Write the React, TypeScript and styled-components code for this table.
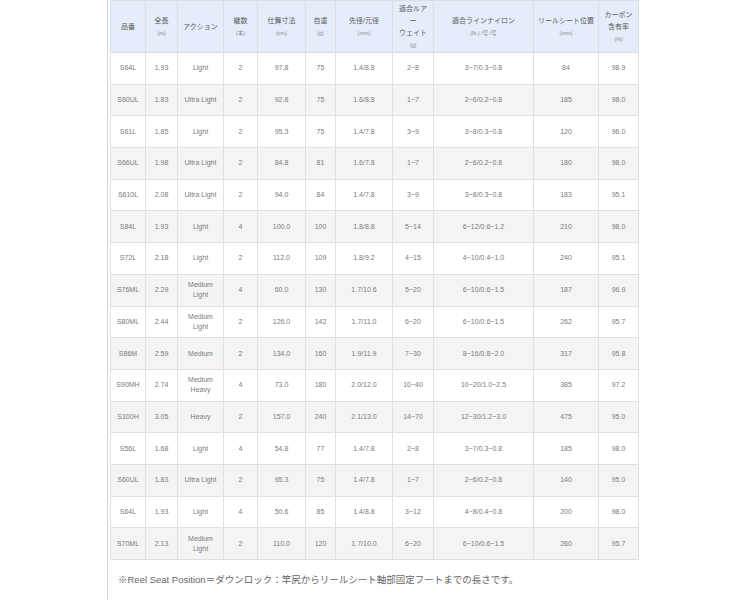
import React from 'react';
import styled, { createGlobalStyle } from 'styled-components';

const GlobalStyle = createGlobalStyle`
  html, body {
    margin: 0;
    padding: 0;
    background: #ffffff;
  }

  body {
    font-family: 'Liberation Sans', 'Noto Sans CJK JP', sans-serif;
  }
`;

const Page = styled.div`
  width: 750px;
  height: 600px;
  overflow: hidden;
  padding-left: 107px;
  box-sizing: border-box;
`;

const Frame = styled.div`
  height: 600px;
  border-left: 1px solid #d6d6d6;
  padding-left: 2px;
  box-sizing: border-box;
`;

const Table = styled.table`
  width: 528px;
  table-layout: fixed;
  border-collapse: collapse;
  color: #7a7a7a;
  font-size: 7px;
`;

const HeadRow = styled.tr`
  height: 52px;
  background: #e4edf9;
`;

const HeadCell = styled.th`
  border: 1px solid #d9dfe6;
  padding: 0 1px;
  font-weight: normal;
  color: #5c5c5c;
  font-size: 7px;
  line-height: 12px;
  text-align: center;
  vertical-align: middle;
`;

const Unit = styled.span`
  display: block;
  font-size: 5.5px;
  color: #8c8c8c;
`;

const Row = styled.tr<{ $shade: boolean }>`
  height: 31.7px;
  background: ${(p) => (p.$shade ? '#f4f4f4' : '#ffffff')};
`;

const Cell = styled.td`
  border: 1px solid #e0e0e0;
  padding: 0 2px;
  text-align: center;
  vertical-align: middle;
  line-height: 10px;
  white-space: nowrap;
`;

const Note = styled.p`
  margin: 12px 0 0 8px;
  font-size: 9.5px;
  color: #666;
`;

const widths = [35, 32, 46, 34, 48, 30, 57, 41, 100, 65, 40];

const heads: [React.ReactNode, string?][] = [
  ['品番'],
  ['全長', '(m)'],
  ['アクション'],
  ['継数', '(本)'],
  ['仕舞寸法', '(cm)'],
  ['自重', '(g)'],
  ['先径/元径', '(mm)'],
  [<>適合ルア<br />ー<br />ウェイト</>, '(g)'],
  [<>適合ラインナイロン</>, '(lb.) /号 /号'],
  ['リールシート位置', '(mm)'],
  [<>カーボン<br />含有率</>, '(%)'],
];

const rows: string[][] = [
  ['S64L', '1.93', 'Light', '2', '97.8', '75', '1.4/8.8', '2~8', '3~7/0.3~0.8', '84', '98.9'],
  ['S60UL', '1.83', 'Ultra Light', '2', '92.8', '75', '1.6/8.8', '1~7', '2~6/0.2~0.8', '185', '98.0'],
  ['S61L', '1.85', 'Light', '2', '95.3', '75', '1.4/7.8', '3~9', '3~8/0.3~0.8', '120', '96.0'],
  ['S66UL', '1.98', 'Ultra Light', '2', '84.8', '81', '1.6/7.8', '1~7', '2~6/0.2~0.8', '180', '98.0'],
  ['S610L', '2.08', 'Ultra Light', '2', '94.0', '84', '1.4/7.8', '3~9', '3~8/0.3~0.8', '183', '95.1'],
  ['S84L', '1.93', 'Light', '4', '100.0', '100', '1.8/8.8', '5~14', '6~12/0.6~1.2', '210', '98.0'],
  ['S72L', '2.18', 'Light', '2', '112.0', '109', '1.8/9.2', '4~15', '4~10/0.4~1.0', '240', '95.1'],
  ['S76ML', '2.29', 'Medium|Light', '4', '60.0', '130', '1.7/10.6', '5~20', '6~10/0.6~1.5', '187', '96.9'],
  ['S80ML', '2.44', 'Medium|Light', '2', '126.0', '142', '1.7/11.0', '6~20', '6~10/0.6~1.5', '262', '95.7'],
  ['S86M', '2.59', 'Medium', '2', '134.0', '160', '1.9/11.9', '7~30', '8~16/0.8~2.0', '317', '95.8'],
  ['S90MH', '2.74', 'Medium|Heavy', '4', '73.0', '180', '2.0/12.0', '10~40', '10~20/1.0~2.5', '385', '97.2'],
  ['S100H', '3.05', 'Heavy', '2', '157.0', '240', '2.1/13.0', '14~70', '12~30/1.2~3.0', '475', '95.0'],
  ['S56L', '1.68', 'Light', '4', '54.8', '77', '1.4/7.8', '2~8', '3~7/0.3~0.8', '185', '98.0'],
  ['S60UL', '1.83', 'Ultra Light', '2', '95.3', '75', '1.4/7.8', '1~7', '2~6/0.2~0.8', '140', '95.0'],
  ['S64L', '1.93', 'Light', '4', '50.6', '85', '1.4/8.8', '3~12', '4~8/0.4~0.8', '200', '98.0'],
  ['S70ML', '2.13', 'Medium|Light', '2', '110.0', '120', '1.7/10.0', '6~20', '6~10/0.6~1.5', '260', '95.7'],
];

const renderText = (text: string) => {
  const parts = text.split('|');
  return parts.map((part, i) => (
    <React.Fragment key={i}>
      {i > 0 && <br />}
      {part}
    </React.Fragment>
  ));
};

const App: React.FC = () => {
  return (
    <Page>
      <GlobalStyle />
      <Frame>
        <Table>
          <colgroup>
            {widths.map((w, i) => (
              <col key={i} style={{ width: w }} />
            ))}
          </colgroup>
          <thead>
            <HeadRow>
              {heads.map(([label, unit], i) => (
                <HeadCell key={i}>
                  {label}
                  {unit && <Unit>{unit}</Unit>}
                </HeadCell>
              ))}
            </HeadRow>
          </thead>
          <tbody>
            {rows.map((row, r) => (
              <Row key={r} $shade={r % 2 === 1}>
                {row.map((value, c) => (
                  <Cell key={c}>{renderText(value)}</Cell>
                ))}
              </Row>
            ))}
          </tbody>
        </Table>
        <Note>
          ※Reel Seat Position＝ダウンロック：竿尻からリールシート軸部固定フートまでの長さです。
        </Note>
      </Frame>
    </Page>
  );
};

export default App;
